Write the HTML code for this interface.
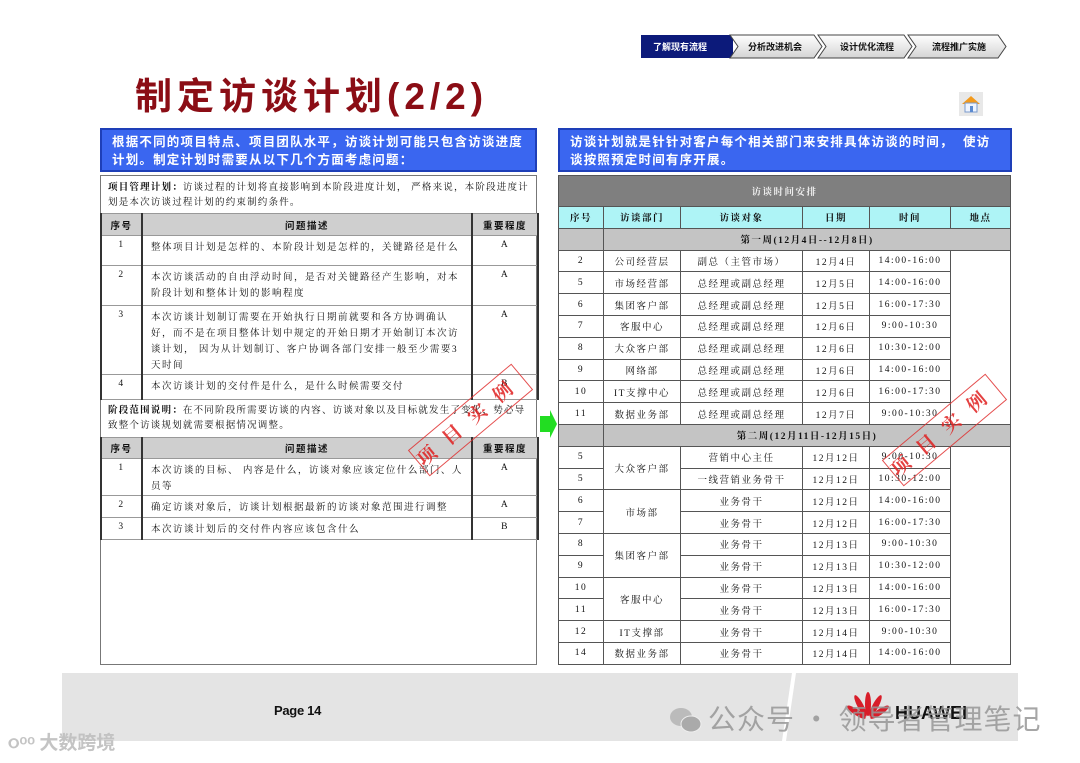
<!DOCTYPE html>
<html><head><meta charset="utf-8"><style>
*{margin:0;padding:0;box-sizing:border-box}
body{width:1080px;height:763px;background:#fff;position:relative;overflow:hidden;font-family:"Liberation Serif","Noto Serif CJK SC","Noto Sans CJK SC",serif;color:#111}
.a{position:absolute}
.title{left:135px;top:66px;font:bold 37px "Liberation Sans","Noto Sans CJK SC",sans-serif;color:#8b0d15;letter-spacing:5px}
.blue{background:#3a66f0;border:2px solid #1e3fb8;color:#fff;font:bold 12.5px/18px "Liberation Sans","Noto Sans CJK SC",sans-serif;padding:3px 10px;letter-spacing:1.2px}
table{border-collapse:collapse;position:absolute;font-size:9.5px;table-layout:fixed}
td{border:1px solid #444;text-align:center;vertical-align:middle;letter-spacing:1.5px}
.lt td{border-left:2px solid #333;border-right:2px solid #333;border-top:1px solid #999;border-bottom:1px solid #999}
.lt td.d{text-align:left;padding:0 8px;vertical-align:top;padding-top:4px;line-height:16px}
.lt td.n{vertical-align:top;padding-top:4px}
.hd td{background:#cfcfcf;font-weight:bold;font-family:"Liberation Sans","Noto Sans CJK SC",sans-serif}
.rt td{border:1px solid #555;height:21.8px;padding:0}
.stamp{border:1.5px solid #e03030;color:#e02020;font:bold 19px "Noto Serif CJK SC",serif;letter-spacing:14px;text-align:center;line-height:30px;width:135px;height:34px;opacity:.85}
</style></head><body>
<div class="a title">制定访谈计划(2/2)</div>

<svg class="a" style="left:638px;top:33px" width="372" height="28">
<defs><linearGradient id="g" x1="0" y1="0" x2="0" y2="1"><stop offset="0" stop-color="#fff"/><stop offset="1" stop-color="#d4d4d4"/></linearGradient></defs>
<rect x="3" y="2" width="92" height="23" fill="#0c1a7a"/>
<path d="M92 2 L176 2 L184 13.5 L176 25 L92 25 L100 13.5Z" fill="url(#g)" stroke="#444"/>
<path d="M180 2 L266 2 L274 13.5 L266 25 L180 25 L188 13.5Z" fill="url(#g)" stroke="#444"/>
<path d="M270 2 L360 2 L368 13.5 L360 25 L270 25 L278 13.5Z" fill="url(#g)" stroke="#444"/>
<text x="15" y="17" fill="#fff" font-size="9" font-weight="bold" font-family="Noto Sans CJK SC,sans-serif">了解现有流程</text>
<text x="110" y="17" fill="#111" font-size="9" font-weight="bold" font-family="Noto Sans CJK SC,sans-serif">分析改进机会</text>
<text x="202" y="17" fill="#111" font-size="9" font-weight="bold" font-family="Noto Sans CJK SC,sans-serif">设计优化流程</text>
<text x="294" y="17" fill="#111" font-size="9" font-weight="bold" font-family="Noto Sans CJK SC,sans-serif">流程推广实施</text>
</svg>
<svg class="a" style="left:959px;top:92px" width="24" height="24">
<rect width="24" height="24" fill="#e8e8e8"/>
<path d="M3 12 L12 4 L21 12Z" fill="#f39a1c"/><rect x="6" y="11" width="12" height="9" fill="#eef4ff" stroke="#7a9acb"/><rect x="11" y="14" width="3" height="6" fill="#5a8ad0"/>
</svg>

<div class="a blue" style="left:100px;top:128px;width:437px;height:44px">根据不同的项目特点、项目团队水平，访谈计划可能只包含访谈进度计划。制定计划时需要从以下几个方面考虑问题：</div>
<div class="a blue" style="left:558px;top:128px;width:454px;height:44px">访谈计划就是针针对客户每个相关部门来安排具体访谈的时间，&nbsp;&nbsp;使访谈按照预定时间有序开展。</div>

<div class="a" style="left:100px;top:175px;width:437px;height:490px;border:1px solid #777"></div>
<div class="a" style="left:108px;top:181px;width:425px;font-size:9.5px;line-height:15px;letter-spacing:1.2px"><b>项目管理计划：</b>访谈过程的计划将直接影响到本阶段进度计划，&nbsp;严格来说，本阶段进度计划是本次访谈过程计划的约束制约条件。</div>
<table class="lt" style="left:100px;top:213px;width:437px">
<colgroup><col style="width:41px"><col style="width:330px"><col style="width:66px"></colgroup>
<tr class="hd" style="height:22px"><td>序号</td><td>问题描述</td><td>重要程度</td></tr>
<tr style="height:30px"><td class="n">1</td><td class="d">整体项目计划是怎样的、本阶段计划是怎样的，关键路径是什么</td><td class="n">A</td></tr>
<tr style="height:40px"><td class="n">2</td><td class="d">本次访谈活动的自由浮动时间，是否对关键路径产生影响，对本阶段计划和整体计划的影响程度</td><td class="n">A</td></tr>
<tr style="height:62px"><td class="n">3</td><td class="d">本次访谈计划制订需要在开始执行日期前就要和各方协调确认好，而不是在项目整体计划中规定的开始日期才开始制订本次访谈计划，&nbsp;因为从计划制订、客户协调各部门安排一般至少需要3天时间</td><td class="n">A</td></tr>
<tr style="height:25px"><td class="n">4</td><td class="d">本次访谈计划的交付件是什么，是什么时候需要交付</td><td class="n">B</td></tr>
</table>
<div class="a" style="left:108px;top:404px;width:425px;font-size:9.5px;line-height:15px;letter-spacing:1.2px"><b>阶段范围说明：</b>在不同阶段所需要访谈的内容、访谈对象以及目标就发生了变化，势必导致整个访谈规划就需要根据情况调整。</div>
<table class="lt" style="left:100px;top:437px;width:437px">
<colgroup><col style="width:41px"><col style="width:330px"><col style="width:66px"></colgroup>
<tr class="hd" style="height:21px"><td>序号</td><td>问题描述</td><td>重要程度</td></tr>
<tr style="height:35px"><td class="n">1</td><td class="d">本次访谈的目标、&nbsp;内容是什么，访谈对象应该定位什么部门、人员等</td><td class="n">A</td></tr>
<tr style="height:22px"><td class="n">2</td><td class="d">确定访谈对象后，访谈计划根据最新的访谈对象范围进行调整</td><td class="n">A</td></tr>
<tr style="height:22px"><td class="n">3</td><td class="d">本次访谈计划后的交付件内容应该包含什么</td><td class="n">B</td></tr>
</table>

<svg class="a" style="left:540px;top:410px" width="18" height="28"><path d="M0 6 H10 V0 L17 14 L10 28 V22 H0Z" fill="#22dd22"/></svg>

<table class="rt" style="left:558px;top:175px;width:452px">
<colgroup><col style="width:45px"><col style="width:77px"><col style="width:122px"><col style="width:67px"><col style="width:81px"><col style="width:60px"></colgroup>
<tr><td colspan="6" style="background:#7f7f7f;color:#eee;height:31px;font-weight:bold">访谈时间安排</td></tr>
<tr style="background:#aef4f6;font-weight:bold"><td>序号</td><td>访谈部门</td><td>访谈对象</td><td>日期</td><td>时间</td><td>地点</td></tr>
<tr style="background:#c4c4c4;font-weight:bold"><td></td><td colspan="5">第一周(12月4日--12月8日)</td></tr>
<tr><td>2</td><td>公司经营层</td><td>副总（主管市场）</td><td>12月4日</td><td>14:00-16:00</td><td rowspan="8" style="border-bottom:none"></td></tr>
<tr><td>5</td><td>市场经营部</td><td>总经理或副总经理</td><td>12月5日</td><td>14:00-16:00</td></tr>
<tr><td>6</td><td>集团客户部</td><td>总经理或副总经理</td><td>12月5日</td><td>16:00-17:30</td></tr>
<tr><td>7</td><td>客服中心</td><td>总经理或副总经理</td><td>12月6日</td><td>9:00-10:30</td></tr>
<tr><td>8</td><td>大众客户部</td><td>总经理或副总经理</td><td>12月6日</td><td>10:30-12:00</td></tr>
<tr><td>9</td><td>网络部</td><td>总经理或副总经理</td><td>12月6日</td><td>14:00-16:00</td></tr>
<tr><td>10</td><td>IT支撑中心</td><td>总经理或副总经理</td><td>12月6日</td><td>16:00-17:30</td></tr>
<tr><td>11</td><td>数据业务部</td><td>总经理或副总经理</td><td>12月7日</td><td>9:00-10:30</td></tr>
<tr style="background:#c4c4c4;font-weight:bold"><td></td><td colspan="5">第二周(12月11日-12月15日)</td></tr>
<tr><td>5</td><td rowspan="2">大众客户部</td><td>营销中心主任</td><td>12月12日</td><td>9:00-10:30</td><td rowspan="10"></td></tr>
<tr><td>5</td><td>一线营销业务骨干</td><td>12月12日</td><td>10:30-12:00</td></tr>
<tr><td>6</td><td rowspan="2">市场部</td><td>业务骨干</td><td>12月12日</td><td>14:00-16:00</td></tr>
<tr><td>7</td><td>业务骨干</td><td>12月12日</td><td>16:00-17:30</td></tr>
<tr><td>8</td><td rowspan="2">集团客户部</td><td>业务骨干</td><td>12月13日</td><td>9:00-10:30</td></tr>
<tr><td>9</td><td>业务骨干</td><td>12月13日</td><td>10:30-12:00</td></tr>
<tr><td>10</td><td rowspan="2">客服中心</td><td>业务骨干</td><td>12月13日</td><td>14:00-16:00</td></tr>
<tr><td>11</td><td>业务骨干</td><td>12月13日</td><td>16:00-17:30</td></tr>
<tr><td>12</td><td>IT支撑部</td><td>业务骨干</td><td>12月14日</td><td>9:00-10:30</td></tr>
<tr><td>14</td><td>数据业务部</td><td>业务骨干</td><td>12月14日</td><td>14:00-16:00</td></tr>
</table>

<div class="a stamp" style="left:403px;top:403px;transform:rotate(-40deg)">项目实例</div>
<div class="a stamp" style="left:877px;top:413px;transform:rotate(-40deg)">项目实例</div>

<div class="a" style="left:62px;top:673px;width:956px;height:68px;background:#e4e4e4"></div>
<svg class="a" style="left:780px;top:673px" width="30" height="68"><path d="M12 0 H16 L6 68 H2Z" fill="#fff"/></svg>
<div class="a" style="left:274px;top:703px;font:bold 13px 'Liberation Sans',sans-serif;letter-spacing:-.3px">Page 14</div>
<svg class="a" style="left:843px;top:692px" width="50" height="40">
<g fill="#d81e2a"><ellipse cx="25" cy="12" rx="3" ry="12"/><ellipse cx="25" cy="12" rx="3" ry="12" transform="rotate(-28 25 28)"/><ellipse cx="25" cy="12" rx="3" ry="12" transform="rotate(28 25 28)"/><ellipse cx="25" cy="14" rx="3" ry="11" transform="rotate(-56 25 28)"/><ellipse cx="25" cy="14" rx="3" ry="11" transform="rotate(56 25 28)"/></g>
</svg>
<div class="a" style="left:895px;top:703px;font:bold 18px 'Liberation Sans',sans-serif;color:#111">HUAWEI</div>
<svg class="a" style="left:668px;top:705px" width="36" height="30"><ellipse cx="13" cy="12" rx="11" ry="9" fill="#bbb"/><ellipse cx="23" cy="19" rx="10" ry="8" fill="#aaa" stroke="#eee"/></svg>
<div class="a" style="left:708px;top:698px;font:28px 'Noto Sans CJK SC',sans-serif;color:rgba(150,150,150,.85);letter-spacing:1px">公众号 · 领导者管理笔记</div>
<div class="a" style="left:8px;top:728px;font:bold 19px 'Noto Sans CJK SC',sans-serif;color:rgba(190,190,190,.9)">&#x0AE6;ᵒᵒ 大数跨境</div>
</body></html>
